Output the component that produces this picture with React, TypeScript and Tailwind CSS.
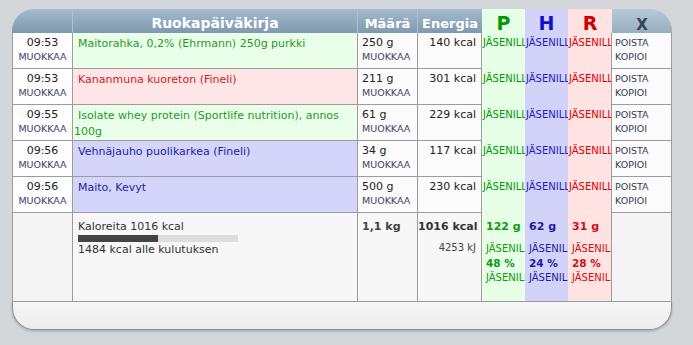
import React from "react";

type Tone = "green" | "red" | "blue";

interface Entry {
  time: string;
  name: string;
  tone: Tone;
  amount: string;
  kcal: string;
}

const entries: Entry[] = [
  { time: "09:53", name: "Maitorahka, 0,2% (Ehrmann) 250g purkki", tone: "green", amount: "250 g", kcal: "140 kcal" },
  { time: "09:53", name: "Kananmuna kuoreton (Fineli)", tone: "red", amount: "211 g", kcal: "301 kcal" },
  { time: "09:55", name: "Isolate whey protein (Sportlife nutrition), annos 100g", tone: "green", amount: "61 g", kcal: "229 kcal" },
  { time: "09:56", name: "Vehnäjauho puolikarkea (Fineli)", tone: "blue", amount: "34 g", kcal: "117 kcal" },
  { time: "09:56", name: "Maito, Kevyt", tone: "blue", amount: "500 g", kcal: "230 kcal" },
];

const toneCell: Record<Tone, string> = {
  green: "bg-[#eaffea] text-[#1f9a1f]",
  red: "bg-[#ffe6e6] text-[#cc2222]",
  blue: "bg-[#d5d5fb] text-[#2222a6]",
};

const cols = "grid grid-cols-[61px_285px_60px_64px_43px_43px_44px_60px]";
const line = "border-[#9c9c9c]";
const hdr = "bg-linear-to-b from-[#a6bbcc] to-[#7692a9] border-r border-[#b3c1cc] flex items-center justify-center";
const muokkaa = "text-[9.5px] leading-[14px] text-[#3b4466]";
const member = "overflow-hidden whitespace-nowrap pl-px pt-[3px] text-[10px] leading-[14px]";

export default function App() {
  return (
    <div className="min-h-[345px] w-[693px] bg-[#d4d7da] pt-[9px] font-['DejaVu_Sans',Verdana,sans-serif] text-[11px] text-[#222]">
      <div className="ml-[12px] w-[660px]">
        {/* header */}
        <div className={`${cols} h-[24px]`}>
          <div className={`${hdr} rounded-tl-[22px]`} />
          <div className={`${hdr} text-[14px] font-bold text-white`}>Ruokapäiväkirja</div>
          <div className={`${hdr} text-[13px] font-bold text-white`}>Määrä</div>
          <div className={`${hdr} border-r-0 text-[13px] font-bold text-white`}>Energia</div>
          <div className="flex items-center justify-center bg-[#e6ffe6] text-[19px] font-bold text-[#009a00]">P</div>
          <div className="flex items-center justify-center bg-[#d3d3fa] text-[19px] font-bold text-[#1010d0]">H</div>
          <div className="flex items-center justify-center bg-[#ffe3e3] text-[19px] font-bold text-[#cc0000]">R</div>
          <div className="flex items-center justify-center rounded-tr-[22px] bg-linear-to-b from-[#b9cad7] to-[#8ea8bb] pt-[3px] text-[15px] font-bold text-[#34465a]">X</div>
        </div>

        {/* entries */}
        {entries.map((e, i) => (
          <div key={i} className={`${cols} h-[36px]`}>
            <div className={`border-b border-l border-r ${line} bg-[#fdfdfd] pt-[3px] text-center leading-[14px]`}>
              <div>{e.time}</div>
              <div className={muokkaa}>MUOKKAA</div>
            </div>
            <div className={`border-b border-r ${line} pl-px pt-[3px] indent-[4px] leading-[16px] ${toneCell[e.tone]}`}>{e.name}</div>
            <div className={`border-b border-r ${line} bg-[#fbfbfb] pl-[4px] pt-[3px] leading-[14px]`}>
              <div>{e.amount}</div>
              <div className={muokkaa}>MUOKKAA</div>
            </div>
            <div className={`whitespace-nowrap border-b border-r ${line} bg-[#fbfbfb] pr-[5px] pt-[3px] text-right leading-[14px]`}>{e.kcal}</div>
            <div className={`${member} bg-[#e6ffe6] text-[#009a00]`}>JÄSENILLE</div>
            <div className={`${member} bg-[#d3d3fa] text-[#1a1acc]`}>JÄSENILLE</div>
            <div className={`${member} border-r ${line} bg-[#ffe3e3] text-[#dd0000]`}>JÄSENILLE</div>
            <div className={`border-b border-r ${line} bg-[#fbfbfb] pl-[3px] pt-[3px] text-[9.5px] leading-[14px] text-[#333c55]`}>
              <div>POISTA</div>
              <div>KOPIOI</div>
            </div>
          </div>
        ))}

        {/* totals */}
        <div className={`${cols} h-[89px]`}>
          <div className={`border-b border-l border-r ${line} bg-[#f4f4f4]`} />
          <div className={`border-b border-r ${line} bg-[#f7f7f7] pl-[5px] pt-[7px] leading-[14px] text-[#333]`}>
            <div>Kaloreita 1016 kcal</div>
            <div className="my-px h-[7px] w-[160px] bg-[#dddddd]">
              <div className="h-full w-[80px] bg-[#444444]" />
            </div>
            <div>1484 kcal alle kulutuksen</div>
          </div>
          <div className={`border-b border-r ${line} bg-[#f7f7f7] pl-[4px] pt-[7px] font-bold leading-[14px] text-[#444]`}>1,1 kg</div>
          <div className={`whitespace-nowrap border-b border-r ${line} bg-[#f7f7f7] pr-[5px] pt-[7px] text-right leading-[14px]`}>
            <div className="font-bold text-[#333]">1016 kcal</div>
            <div className="mt-[7px] text-[10px] text-[#444]">4253 kJ</div>
          </div>
          {[
            { bg: "bg-[#e6ffe6]", fg: "text-[#0f9a0f]", g: "122 g", p: "48 %", extra: "" },
            { bg: "bg-[#d3d3fa]", fg: "text-[#1a1aaa]", g: "62 g", p: "24 %", extra: "" },
            { bg: "bg-[#ffe3e3]", fg: "text-[#cc1111]", g: "31 g", p: "28 %", extra: `border-r ${line}` },
          ].map((m, i) => (
            <div key={i} className={`overflow-hidden whitespace-nowrap border-b ${line} ${m.bg} ${m.fg} ${m.extra} pl-[4px] pt-[7px] leading-[14px]`}>
              <div className="font-bold">{m.g}</div>
              <div className="mt-[8px] text-[10px] leading-[14px]">JÄSENILLE</div>
              <div className="text-[10.5px] font-bold">{m.p}</div>
              <div className="text-[10px] leading-[16px]">JÄSENILLE</div>
            </div>
          ))}
          <div className={`border-b border-r ${line} bg-[#f4f4f4]`} />
        </div>

        {/* footer */}
        <div className="h-[28px] rounded-b-[22px] border-x border-b border-[#8e8e8e] bg-linear-to-b from-[#f6f6f6] to-[#ededed] shadow-[0_1px_3px_rgba(0,0,0,0.25)]" />
      </div>
    </div>
  );
}
